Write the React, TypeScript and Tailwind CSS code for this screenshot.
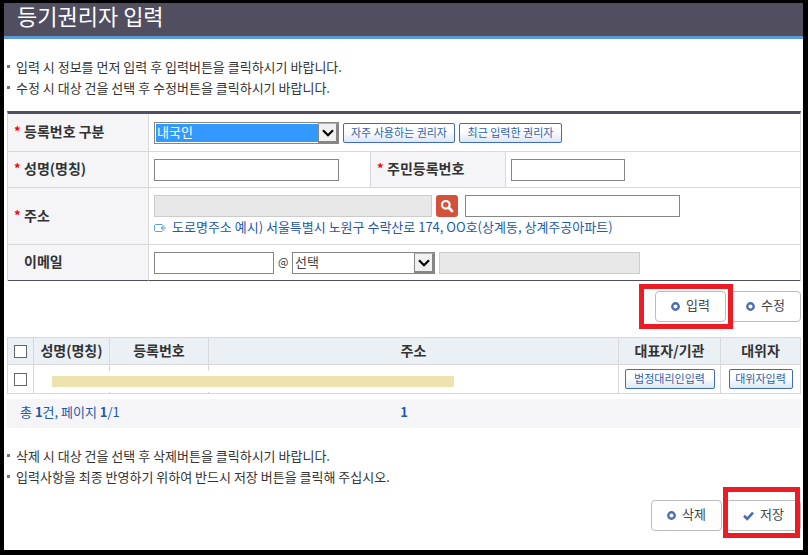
import type { ReactNode } from 'react';

const box = 'h-[22px] border border-[#868686] bg-white px-1 text-[13px] outline-none';
const boxOff = 'h-[22px] border border-[#cccccc] bg-[#e8e8e8] px-1 text-[13px] outline-none';

function Th({ children, htmlFor, required, className = '' }: { children: ReactNode; htmlFor: string; required?: boolean; className?: string }) {
  return (
    <th scope="row" className={`border-r border-b border-[#d8d8dc] bg-[#f5f5f8] pb-[3px] pl-[6px] text-left text-[14px] leading-5 font-bold ${className}`}>
      <label htmlFor={htmlFor} className="flex items-center">
        <span className="w-[10px] text-[13px] text-[#ff0000]">{required && '*'}</span>
        {children}
      </label>
    </th>
  );
}

function Dropdown({ id, option, active, className }: { id: string; option: string; active?: boolean; className: string }) {
  return (
    <span className={`relative flex h-[22px] border border-[#868686] bg-white p-px ${className}`}>
      <select
        id={id}
        className={`w-full appearance-none pr-5 pb-[2px] pl-px text-[13px] leading-4 outline-none ${active ? 'bg-[#3399ff] text-white' : 'bg-white text-[#444444]'}`}
      >
        <option>{option}</option>
      </select>
      <span className="pointer-events-none absolute inset-y-0 right-0 flex w-[20px] items-center justify-center border border-r-2 border-b-2 border-[#868686] border-t-[#b4b4b4] bg-[#f0f0f0]">
        <svg viewBox="0 0 12 8" className="mt-px w-3" fill="none" stroke="#000" strokeWidth="2.2">
          <path d="M1 1.2 L6 6.2 L11 1.2" />
        </svg>
      </span>
    </span>
  );
}

function SmallButton({ children, className }: { children: ReactNode; className: string }) {
  return (
    <button
      type="button"
      className={`h-5 rounded-[2px] border border-[#3f6db5] bg-linear-to-b from-white from-40% to-[#dce6f5] pb-[2px] text-[11px] leading-4 whitespace-nowrap text-[#2f62ad] ${className}`}
    >
      {children}
    </button>
  );
}

function ActionButton({ children, icon, className = 'w-[71px]' }: { children: ReactNode; icon: 'ring' | 'check'; className?: string }) {
  return (
    <button type="button" className={`flex h-[31px] items-center justify-center gap-[6px] rounded-[4px] border border-[#bbbbbb] bg-white pb-[3px] text-[13px] text-[#444444] ${className}`}>
      {icon === 'ring' ? (
        <svg viewBox="0 0 10 10" className="mt-[3px] size-[9px]">
          <circle cx="5" cy="5" r="3.6" fill="none" stroke="#4a6cb0" strokeWidth="2.6" />
        </svg>
      ) : (
        <svg viewBox="0 0 11 10" className="mt-[3px] w-[11px]" fill="none" stroke="#4a6cb0" strokeWidth="2.6">
          <path d="M1 4.8 L4.2 7.8 L10 1.6" />
        </svg>
      )}
      {children}
    </button>
  );
}

function Notes({ items }: { items: string[] }) {
  return (
    <ul className="text-[13px] leading-[21px]">
      {items.map((text) => (
        <li key={text} className="flex items-center gap-[6px]">
          <span className="size-[3px] bg-[#777777]" />
          {text}
        </li>
      ))}
    </ul>
  );
}

export default function App() {
  return (
    <div className="min-h-screen border-t-[3px] border-r-[5px] border-b-[5px] border-l-[4px] border-black bg-white font-['Noto_Sans_CJK_KR',sans-serif] text-[#333333]">
      <header className="h-9 border-b-[3px] border-[#5b9bd5] bg-[#504e5f] pl-[13px]">
        <h1 className="text-[22px] leading-6 text-white">등기권리자 입력</h1>
      </header>

      <main className="pt-[17px] pr-[2px] pl-[3px]">
        <Notes items={['입력 시 정보를 먼저 입력 후 입력버튼을 클릭하시기 바랍니다.', '수정 시 대상 건을 선택 후 수정버튼을 클릭하시기 바랍니다.']} />

        {/* 입력 폼 */}
        <table className="mt-[13px] w-full table-fixed border-separate border-spacing-0 border-t-[3px] border-r border-l border-t-[#504e5f] border-r-[#d8d8dc] border-l-[#d8d8dc]">
          <colgroup>
            <col className="w-[141px]" />
            <col className="w-[222px]" />
            <col className="w-[135px]" />
            <col />
          </colgroup>
          <tbody>
            <tr className="h-[38px]">
              <Th htmlFor="kind" required>등록번호 구분</Th>
              <td colSpan={3} className="border-b border-[#d8d8dc] pl-[5px]">
                <div className="flex items-center gap-1">
                  <Dropdown id="kind" option="내국인" active className="w-[185px]" />
                  <SmallButton className="w-[112px]">자주 사용하는 권리자</SmallButton>
                  <SmallButton className="w-[103px]">최근 입력한 권리자</SmallButton>
                </div>
              </td>
            </tr>
            <tr className="h-9">
              <Th htmlFor="name" required>성명(명칭)</Th>
              <td className="border-r border-b border-[#d8d8dc] pl-[5px]">
                <input id="name" className={`${box} block w-[185px]`} />
              </td>
              <Th htmlFor="rrn" required>주민등록번호</Th>
              <td className="border-b border-[#d8d8dc] pl-[5px]">
                <input id="rrn" className={`${box} block w-[114px]`} />
              </td>
            </tr>
            <tr className="h-[57px]">
              <Th htmlFor="addr" required>주소</Th>
              <td colSpan={3} className="border-b border-[#d8d8dc] pl-[5px]">
                <div className="flex items-center gap-1">
                  <input id="addr" readOnly className={`${boxOff} w-[278px]`} />
                  <button type="button" aria-label="주소 검색" className="flex size-[22px] items-center justify-center rounded-[3px] bg-[#d4523a]">
                    <svg viewBox="0 0 14 14" className="size-[14px]" fill="none" stroke="#fff">
                      <circle cx="5.8" cy="5.8" r="3.8" strokeWidth="2.2" />
                      <path d="M8.8 8.8 L12 12" strokeWidth="2.8" strokeLinecap="round" />
                    </svg>
                  </button>
                  <input aria-label="상세 주소" className={`${box} ml-[3px] w-[215px]`} />
                </div>
                <p className="flex items-center gap-[6px] pb-px text-[13px] leading-5 text-[#225aa8]">
                  <svg viewBox="0 0 12 8" className="mt-[3px] w-3" fill="none" stroke="#5ba3d9">
                    <path d="M1.5 0.5 H8 L11.5 4 L8 7.5 H1.5 L0.5 6.5 V1.5 Z" />
                    <path d="M7.5 3 H9 V5 H7.5 Z" />
                  </svg>
                  도로명주소 예시) 서울특별시 노원구 수락산로 174, OO호(상계동, 상계주공아파트)
                </p>
              </td>
            </tr>
            <tr className="h-9">
              <Th htmlFor="mail" className="border-b-[#504e5f]">이메일</Th>
              <td colSpan={3} className="border-b border-[#504e5f] pl-[5px]">
                <div className="flex items-center gap-1">
                  <input id="mail" className={`${box} w-[120px]`} />
                  <label htmlFor="domain" className="w-[10px] pb-[3px] text-[11px] leading-4">@</label>
                  <Dropdown id="domain" option="선택" className="w-[143px]" />
                  <input aria-label="메일 도메인" readOnly className={`${boxOff} w-[201px]`} />
                </div>
              </td>
            </tr>
          </tbody>
        </table>

        <div className="mt-[10px] flex justify-end gap-1">
          <div className="relative">
            <ActionButton icon="ring">입력</ActionButton>
            <span className="pointer-events-none absolute -top-[7px] -right-[7px] -bottom-[7px] -left-4 border-[5px] border-[#ed1c24]" />
          </div>
          <ActionButton icon="ring">수정</ActionButton>
        </div>

        {/* 권리자 목록 */}
        <table className="mt-[15px] w-full table-fixed border-separate border-spacing-0 border-t border-l border-[#d8d8dc] text-center">
          <colgroup>
            <col className="w-[26px]" />
            <col className="w-[76px]" />
            <col className="w-[99px]" />
            <col />
            <col className="w-[102px]" />
            <col className="w-[80px]" />
          </colgroup>
          <thead>
            <tr className="h-[27px] bg-[#ebf0f4] text-[14px] leading-5 [&>th]:border-r [&>th]:border-b [&>th]:border-[#d8d8dc] [&>th]:pb-[3px]">
              <th>
                <input type="checkbox" aria-label="전체 선택" className="mx-auto mt-[3px] block size-[13px] appearance-none border border-[#666666] bg-white" />
              </th>
              <th>성명(명칭)</th>
              <th>등록번호</th>
              <th>주소</th>
              <th>대표자/기관</th>
              <th>대위자</th>
            </tr>
          </thead>
          <tbody>
            <tr className="h-[29px] [&>td]:border-r [&>td]:border-b [&>td]:border-[#d8d8dc]">
              <td>
                <input type="checkbox" aria-label="선택" className="mx-auto block size-[13px] appearance-none border border-[#666666] bg-white" />
              </td>
              <td className="relative">
                {/* 개인정보 가림 */}
                <div className="absolute top-[6px] left-0 z-10 h-[21px] w-[430px] bg-white pt-[5px] pl-[18px]">
                  <div className="h-[11px] w-[402px] bg-[#eee2ae]" />
                </div>
              </td>
              <td />
              <td />
              <td>
                <SmallButton className="mx-auto block w-[90px]">법정대리인입력</SmallButton>
              </td>
              <td>
                <SmallButton className="mx-auto block w-[64px]">대위자입력</SmallButton>
              </td>
            </tr>
          </tbody>
        </table>

        <div className="mt-[5px] grid h-[29px] grid-cols-3 items-center bg-[#f5f5f8] px-[13px] pb-[3px] text-[13px] leading-5 text-[#225aa8]">
          <span>총 <b>1</b>건, 페이지 <b>1</b>/1</span>
          <b className="text-center">1</b>
        </div>

        <div className="mt-[17px]">
          <Notes items={['삭제 시 대상 건을 선택 후 삭제버튼을 클릭하시기 바랍니다.', '입력사항을 최종 반영하기 위하여 반드시 저장 버튼을 클릭해 주십시오.']} />
        </div>

        <div className="mt-[13px] flex justify-end gap-1">
          <ActionButton icon="ring">삭제</ActionButton>
          <div className="relative">
            <ActionButton icon="check" className="w-[75px]">저장</ActionButton>
            <span className="pointer-events-none absolute -top-[13px] right-px -bottom-[7px] -left-[3px] border-[5px] border-[#ed1c24]" />
          </div>
        </div>
      </main>
    </div>
  );
}
